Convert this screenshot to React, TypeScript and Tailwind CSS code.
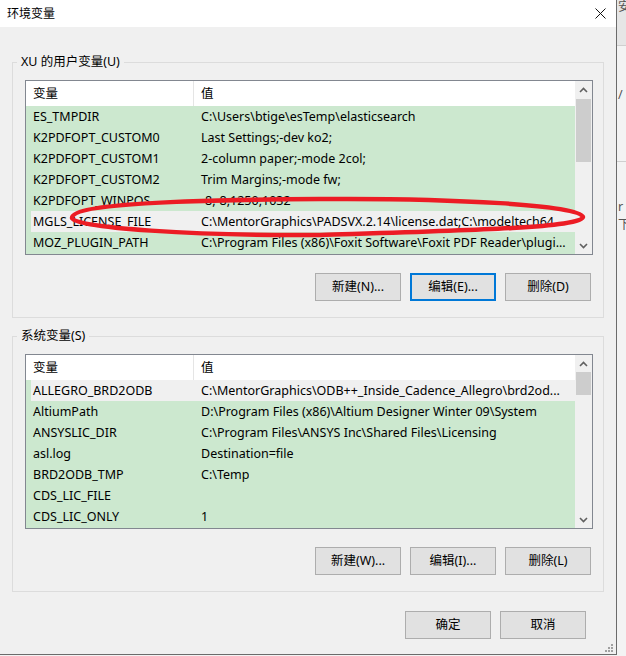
import React from 'react';

type Row = [string, string];

const userVars: Row[] = [
  ['ES_TMPDIR', 'C:\\Users\\btige\\esTemp\\elasticsearch'],
  ['K2PDFOPT_CUSTOM0', 'Last Settings;-dev ko2;'],
  ['K2PDFOPT_CUSTOM1', '2-column paper;-mode 2col;'],
  ['K2PDFOPT_CUSTOM2', 'Trim Margins;-mode fw;'],
  ['K2PDFOPT_WINPOS', '-8,-8,1250,1032'],
  ['MGLS_LICENSE_FILE', 'C:\\MentorGraphics\\PADSVX.2.14\\license.dat;C:\\modeltech64'],
  ['MOZ_PLUGIN_PATH', 'C:\\Program Files (x86)\\Foxit Software\\Foxit PDF Reader\\plugi...'],
];

const systemVars: Row[] = [
  ['ALLEGRO_BRD2ODB', 'C:\\MentorGraphics\\ODB++_Inside_Cadence_Allegro\\brd2od...'],
  ['AltiumPath', 'D:\\Program Files (x86)\\Altium Designer Winter 09\\System'],
  ['ANSYSLIC_DIR', 'C:\\Program Files\\ANSYS Inc\\Shared Files\\Licensing'],
  ['asl.log', 'Destination=file'],
  ['BRD2ODB_TMP', 'C:\\Temp'],
  ['CDS_LIC_FILE', ''],
  ['CDS_LIC_ONLY', '1'],
];

function Chevron({ down }: { down?: boolean }) {
  return (
    <svg width="9" height="6" viewBox="0 0 9 6" className={down ? 'rotate-180' : ''}>
      <path d="M1 5 L4.5 1.5 L8 5" fill="none" stroke="#606060" strokeWidth="1.6" />
    </svg>
  );
}

function ListView({ rows, selected, thumb }: { rows: Row[]; selected: number; thumb: string }) {
  return (
    <div className="ml-[12px] flex h-[175px] w-[568px] overflow-hidden border border-[#828790] bg-[#cce8cf]">
      <div className="flex min-w-0 flex-1 flex-col">
        <div className="flex h-[25px] shrink-0 items-center bg-white">
          <div className="flex h-full w-[168px] items-center border-r border-[#e5e5e5] pl-[7px] pt-[1px]">变量</div>
          <div className="pl-[7px] pt-[1px]">值</div>
        </div>
        {rows.map(([name, value], i) => (
          <div key={name} className="flex h-[21px] shrink-0">
            <div
              className={`flex min-w-0 flex-1 items-center whitespace-nowrap pt-[2px] ${
                i === selected ? 'ml-[5px] bg-[#f0f0f0]' : ''
              }`}
            >
              <div className={`shrink-0 overflow-hidden ${i === selected ? 'w-[163px] pl-[2px]' : 'w-[168px] pl-[7px]'}`}>
                {name}
              </div>
              <div className="overflow-hidden pl-[7px]">{value}</div>
            </div>
          </div>
        ))}
      </div>
      <div className="flex w-[17px] shrink-0 flex-col items-center bg-[#f0f0f0]">
        <div className="flex h-[17px] w-full items-center justify-center">
          <Chevron />
        </div>
        <div className={`w-[15px] bg-[#cdcdcd] ${thumb}`} />
        <div className="flex-1" />
        <div className="flex h-[17px] w-full items-center justify-center">
          <Chevron down />
        </div>
      </div>
    </div>
  );
}

function Btn({ label, focused }: { label: string; focused?: boolean }) {
  return (
    <button
      className={`flex h-[28px] w-[86px] items-center justify-center bg-[#e1e1e1] ${
        focused ? 'border-2 border-[#0078d7]' : 'border border-[#adadad]'
      }`}
    >
      {label}
    </button>
  );
}

function Group({
  title,
  rows,
  selected,
  thumb,
  buttons,
  className,
}: {
  title: string;
  rows: Row[];
  selected: number;
  thumb: string;
  buttons: string[];
  className: string;
}) {
  return (
    <fieldset className={`ml-[12px] w-[592px] border border-[#dcdcdc] pb-[16px] ${className}`}>
      <legend className="ml-[4px] px-[4px] leading-[16px]">{title}</legend>
      <div className="mt-[10px]">
        <ListView rows={rows} selected={selected} thumb={thumb} />
      </div>
      <div className="mt-[18px] flex justify-end gap-[9px] pr-[12px]">
        <Btn label={buttons[0]} />
        <Btn label={buttons[1]} focused={buttons[1].startsWith('编辑(E)')} />
        <Btn label={buttons[2]} />
      </div>
    </fieldset>
  );
}

export default function App() {
  return (
    <div
      className="flex h-[656px] w-[626px] overflow-hidden bg-[#f3f3f3] text-[12.5px] text-black"
      style={{ fontFamily: '"Noto Sans", "Noto Sans CJK SC", sans-serif' }}
    >
      <div className="relative flex h-[655px] w-[617px] shrink-0 flex-col border-r border-b border-[#6b6b6b] bg-[#f0f0f0]">
        <div className="flex h-[27px] shrink-0 items-center justify-between bg-white pl-[7px] pr-[10px]">
          <span className="text-[12px]">环境变量</span>
          <svg width="11" height="11" viewBox="0 0 11 11">
            <path d="M0.5 0.5 L10.5 10.5 M10.5 0.5 L0.5 10.5" stroke="#111" strokeWidth="1" />
          </svg>
        </div>

        <Group
          title="XU 的用户变量(U)"
          rows={userVars}
          selected={5}
          thumb="mt-[1px] h-[63px]"
          buttons={['新建(N)...', '编辑(E)...', '删除(D)']}
          className="mt-[27px]"
        />
        <Group
          title="系统变量(S)"
          rows={systemVars}
          selected={0}
          thumb="h-[23px]"
          buttons={['新建(W)...', '编辑(I)...', '删除(L)']}
          className="mt-[10px]"
        />

        <div className="mt-[19px] flex justify-end gap-[9px] pr-[30px]">
          <Btn label="确定" />
          <Btn label="取消" />
        </div>

        {/* resize grip */}
        <svg className="absolute bottom-[2px] right-[3px]" width="8" height="8" viewBox="0 0 8 8">
          <g fill="#a0a0a0">
            <rect x="6" y="0" width="2" height="2" />
            <rect x="3" y="3" width="2" height="2" />
            <rect x="6" y="3" width="2" height="2" />
            <rect x="0" y="6" width="2" height="2" />
            <rect x="3" y="6" width="2" height="2" />
            <rect x="6" y="6" width="2" height="2" />
          </g>
        </svg>

        {/* red hand-drawn mark */}
        <svg className="pointer-events-none absolute left-0 top-0" width="617" height="260">
          <path
            d="M72 218 C72 206 150 200 320 199 C450 198 583 205 583 217 C583 228 450 231 320 235 C200 236 72 228 72 218 Z"
            fill="none"
            stroke="#ec1c24"
            strokeWidth="4.5"
          />
        </svg>
      </div>

      <div className="flex flex-1 flex-col overflow-hidden text-[#555]">
        <div className="h-[46px] border-b border-[#cfcfcf] bg-[#e6e6e6] pl-[1px] leading-[14px]">安</div>
        <div className="mt-[40px] h-[76px] border-b border-[#cfcfcf] pl-[1px]">/</div>
        <div className="mt-[36px] pl-[1px] leading-[18px]">r</div>
        <div className="pl-[1px] leading-[18px]">下</div>
      </div>
    </div>
  );
}
